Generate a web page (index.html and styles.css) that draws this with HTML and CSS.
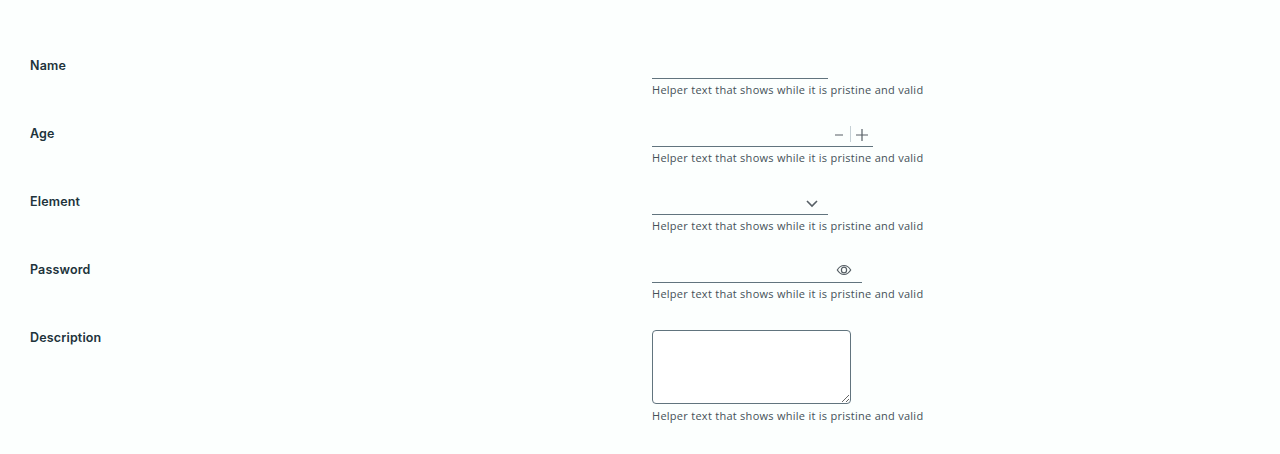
FILE: index.html
```
<!DOCTYPE html>
<html lang="en"><head><meta charset="utf-8"><title>Form</title><link rel="stylesheet" href="styles.css"></head>
<body><form class="form">
<div class="row"><label class="label" for="name">Name</label><div class="control"><div class="line name"><input class="input" id="name"></div><p class="helper">Helper text that shows while it is pristine and valid</p></div></div>
<div class="row"><label class="label" for="age">Age</label><div class="control"><div class="line age"><input class="input" id="age"><svg class="stepper" width="38" height="18" viewBox="0 0 38 18"><path class="step" d="M0 10h8M21 10h12M27 4v12"/><path class="divider" d="M15.5 1v16"/></svg></div><p class="helper">Helper text that shows while it is pristine and valid</p></div></div>
<div class="row"><label class="label" for="element">Element</label><div class="control"><div class="line element"><input class="input" id="element"><svg class="chevron" width="12" height="8" viewBox="0 0 12 8"><path d="M1 1l5 5 5-5"/></svg></div><p class="helper">Helper text that shows while it is pristine and valid</p></div></div>
<div class="row"><label class="label" for="password">Password</label><div class="control"><div class="line password"><input class="input" id="password" type="password"><svg class="eye" width="16" height="12" viewBox="0 0 16 12"><path d="M1.3 6Q4 1.5 8 1.5T14.7 6Q12 10.5 8 10.5T1.3 6Z"/><ellipse cx="8" cy="6" rx="2.6" ry="2.9"/></svg></div><p class="helper">Helper text that shows while it is pristine and valid</p></div></div>
<div class="row last"><label class="label" for="description">Description</label><div class="control"><textarea class="textarea" id="description"></textarea><p class="helper">Helper text that shows while it is pristine and valid</p></div></div>
</form></body></html>
```
FILE: styles.css
```
*{box-sizing:border-box}
body{margin:0;background:#fcfffe;font-family:Metropolis,"Open Sans",sans-serif;color:#21333b}
.form{height:454px;padding:54px 30px 0}
.row{display:grid;grid-template-columns:622px 1fr;height:68px}
.last{height:128px}
.label{font:600 12.5px/23px Metropolis,Inter,sans-serif;letter-spacing:.16px}
.line{display:flex;height:25px;border-bottom:1px solid #61747e}
.input{flex:1;min-width:0;border:0;background:transparent;outline:0}
.helper{margin:0;font-size:11px;line-height:22px;letter-spacing:.27px;color:#455158;white-space:nowrap}
.name,.element{width:176px}
.age{width:221px}
.password{width:210px}
svg{flex:none;fill:none;stroke:#565f65}
.stepper{margin-top:3px}
.step{stroke-width:1.2}
.divider{stroke:#c5d0d5}
.chevron{margin:10px 10px 0 0;stroke-width:1.6}
.eye{margin:6px 10px 0 0;stroke-width:1.2}
.textarea{display:block;margin:4px 0 1px;width:199px;height:74px;border:1px solid #61747e;border-radius:4px;background:#fff}
```
